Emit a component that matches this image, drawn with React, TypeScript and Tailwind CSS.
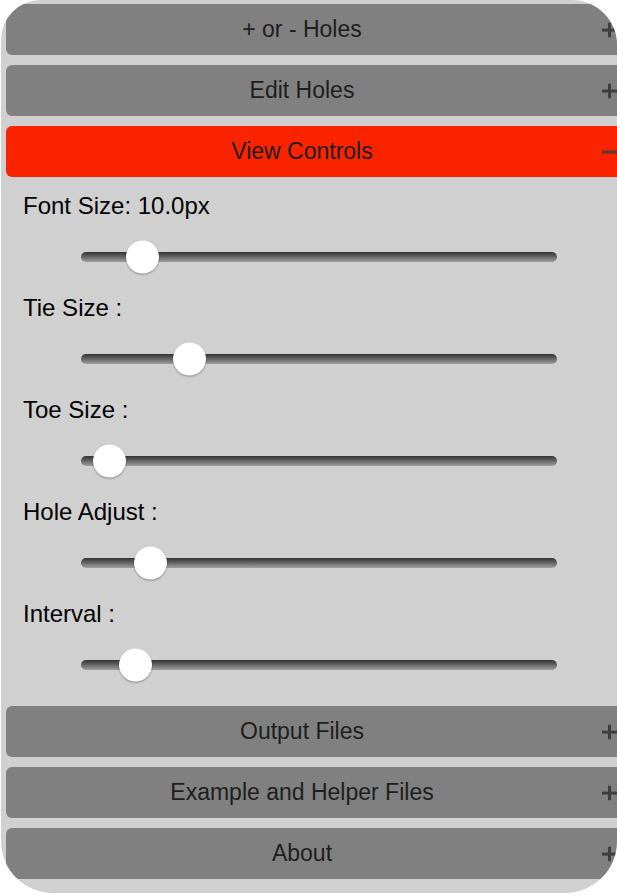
import React from 'react';

type Section = { title: string; open?: boolean };

const topSections: Section[] = [
  { title: '+ or - Holes' },
  { title: 'Edit Holes' },
  { title: 'View Controls', open: true },
];

const bottomSections: Section[] = [
  { title: 'Output Files' },
  { title: 'Example and Helper Files' },
  { title: 'About' },
];

const sliders = [
  { label: 'Font Size: 10.0px', pos: 61 },
  { label: 'Tie Size :', pos: 108 },
  { label: 'Toe Size :', pos: 28 },
  { label: 'Hole Adjust :', pos: 69 },
  { label: 'Interval :', pos: 54 },
];

const Header: React.FC<{ section: Section; first?: boolean }> = ({ section, first }) => (
  <div
    className={`relative flex h-[51px] w-[621px] items-center justify-center rounded-[6px] pr-[29px] text-[23px] text-[#1e1e1e] ${
      section.open ? 'bg-[#fa2300]' : 'bg-[#808080]'
    } ${first ? '' : 'mt-[10px]'}`}
  >
    <span>{section.title}</span>
    <svg
      className="absolute left-[596px] top-1/2 h-[15px] w-[15px] -translate-y-1/2"
      viewBox="0 0 16 16"
    >
      <rect x="0" y="6.5" width="16" height="3.2" fill={section.open ? '#5a3a34' : '#3e3e3e'} />
      {!section.open && <rect x="6.4" y="0" width="3.2" height="16" fill="#3e3e3e" />}
    </svg>
  </div>
);

const Slider: React.FC<{ label: string; pos: number }> = ({ label, pos }) => (
  <div className="h-[102px]">
    <div className="h-[24px] pl-[17px] text-[24px] leading-[24px] text-black">{label}</div>
    <div className="flex h-[78px] items-center">
      <div className="relative ml-[75px] h-[10px] w-[476px] rounded-full bg-linear-to-b from-[#333333] to-[#a0a0a0]">
        <div
          className="absolute top-1/2 h-[33px] w-[33px] -translate-y-1/2 rounded-full bg-white shadow-[0_1px_2px_rgba(0,0,0,0.35)]"
          style={{ left: pos - 16.5 }}
        />
      </div>
    </div>
  </div>
);

export default function App() {
  return (
    <div className="h-[895px] w-[617px] overflow-hidden bg-white font-['Liberation_Sans',Arial,sans-serif]">
      <div className="ml-[1px] h-[893px] w-[616px] overflow-hidden rounded-tl-[40px] rounded-tr-[45px] rounded-b-[52px] bg-[#d0d0d0] pl-[5px] pt-[4px]">
        {topSections.map((s, i) => (
          <Header key={s.title} section={s} first={i === 0} />
        ))}
        <div className="h-[519px] pt-[17px]">
          {sliders.map((s) => (
            <Slider key={s.label} label={s.label} pos={s.pos} />
          ))}
        </div>
        {bottomSections.map((s) => (
          <Header key={s.title} section={s} />
        ))}
      </div>
    </div>
  );
}
